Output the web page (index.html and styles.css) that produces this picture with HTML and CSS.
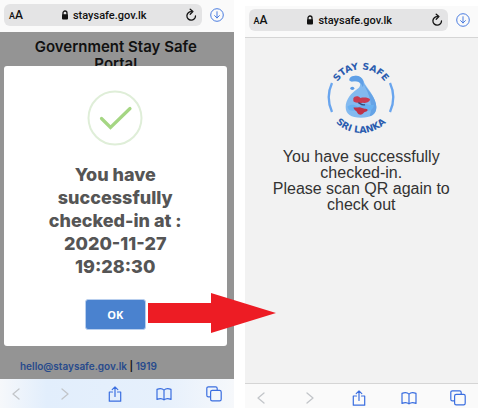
FILE: index.html
```html
<!DOCTYPE html>
<html lang="en">
<head>
    <meta charset="UTF-8">
    <meta name="viewport" content="width=device-width, initial-scale=1.0">
    <title>Stay Safe - Check in</title>
    <link rel="stylesheet" href="styles.css">
</head>
<body>
    <!-- shared icons -->
    <svg class="sprite" aria-hidden="true">
        <symbol id="lock" viewBox="0 0 8 10">
            <path d="M2 5V3a2 2 0 0 1 4 0v2" fill="none" stroke="currentColor" stroke-width="1.3"/>
            <rect x="1" y="4.3" width="6" height="5.2" rx="1" fill="currentColor"/>
        </symbol>
        <symbol id="reload" viewBox="0 0 12 14">
            <path d="M6.5 3.6A4.3 4.3 0 1 0 10.5 8" fill="none" stroke="currentColor" stroke-width="1.3" stroke-linecap="round"/>
            <path d="M5.2 1.2l2.7 2.4-2.7 2.6" fill="none" stroke="currentColor" stroke-width="1.3" stroke-linecap="round" stroke-linejoin="round"/>
        </symbol>
        <symbol id="download" viewBox="0 0 14 14">
            <circle cx="7" cy="7" r="6.3" fill="none" stroke="currentColor"/>
            <path d="M7 3.7v6.2M4.6 7.6L7 10l2.4-2.4" fill="none" stroke="currentColor" stroke-linecap="round" stroke-linejoin="round"/>
        </symbol>
        <symbol id="back" viewBox="0 0 16 16">
            <path d="M11 3L5 8l6 5" fill="none" stroke="currentColor" stroke-width="1.3" stroke-linecap="round" stroke-linejoin="round"/>
        </symbol>
        <symbol id="forward" viewBox="0 0 16 16">
            <path d="M5 3l6 5-6 5" fill="none" stroke="currentColor" stroke-width="1.3" stroke-linecap="round" stroke-linejoin="round"/>
        </symbol>
        <symbol id="share" viewBox="0 0 16 16">
            <path d="M5.5 6H2.3v9.2h11.4V6h-3.2M8 10.5V1M5.2 3.6L8 .9l2.8 2.7" fill="none" stroke="currentColor" stroke-width="1.2" stroke-linecap="round" stroke-linejoin="round"/>
        </symbol>
        <symbol id="book" viewBox="0 0 16 16">
            <path d="M8 4.2C6.4 2.4 3.2 2.4 1 3.4v10c2.2-1 5.4-1 7 .5 1.6-1.5 4.8-1.5 7-.5v-10c-2.2-1-5.4-1-7 .8zM8 4.2v9.7" fill="none" stroke="currentColor" stroke-width="1.2" stroke-linejoin="round"/>
        </symbol>
        <symbol id="tabs" viewBox="0 0 16 16">
            <path d="M4.6 10.8H2.4A1.6 1.6 0 0 1 .8 9.2V2.4A1.6 1.6 0 0 1 2.4.8h7.2a1.6 1.6 0 0 1 1.6 1.6v2" fill="none" stroke="currentColor" stroke-width="1.2"/>
            <rect x="4.6" y="4.4" width="10.6" height="10.4" rx="1.6" fill="none" stroke="currentColor" stroke-width="1.2"/>
        </symbol>
    </svg>

    <main class="steps">
        <section class="phone">
            <header class="browser-bar">
                <div class="address">
                    <button class="text-size" aria-label="Text size"><small>A</small>A</button>
                    <span class="url"><svg class="icon-lock"><use href="#lock"/></svg>staysafe.gov.lk</span>
                    <button class="reload" aria-label="Reload"><svg><use href="#reload"/></svg></button>
                </div>
                <button class="download" aria-label="Downloads"><svg><use href="#download"/></svg></button>
            </header>
            <div class="page dimmed">
                <h1>Government Stay Safe Portal</h1>
                <div class="modal" role="dialog" aria-labelledby="modal-title">
                    <svg class="success" viewBox="0 0 56 56" aria-hidden="true">
                        <circle cx="28" cy="28" r="26.5" fill="none" stroke="#dfeed8" stroke-width="2"/>
                        <path d="M14.5 28.5l9 9L43 18.5" fill="none" stroke="#a5d683" stroke-width="3.2" stroke-linecap="round"/>
                    </svg>
                    <h2 id="modal-title">You have successfully checked-in at : 2020-11-27 19:28:30</h2>
                    <div class="confirm">
                        <button class="ok">OK</button>
                        <svg class="arrow" viewBox="0 0 128 40" aria-hidden="true">
                            <path d="M0 10h63V0l65 20-65 20V30H0z" fill="#ed1c24"/>
                        </svg>
                    </div>
                </div>
                <p class="contact"><a href="mailto:hello@staysafe.gov.lk">hello@staysafe.gov.lk</a> | <a href="tel:1919">1919</a></p>
            </div>
            <nav class="toolbar tinted">
                <button aria-label="Back" disabled><svg><use href="#back"/></svg></button>
                <button aria-label="Forward" disabled><svg><use href="#forward"/></svg></button>
                <button aria-label="Share"><svg><use href="#share"/></svg></button>
                <button aria-label="Bookmarks"><svg><use href="#book"/></svg></button>
                <button aria-label="Tabs"><svg><use href="#tabs"/></svg></button>
            </nav>
        </section>

        <section class="phone second">
            <header class="browser-bar">
                <div class="address">
                    <button class="text-size" aria-label="Text size"><small>A</small>A</button>
                    <span class="url"><svg class="icon-lock"><use href="#lock"/></svg>staysafe.gov.lk</span>
                    <button class="reload" aria-label="Reload"><svg><use href="#reload"/></svg></button>
                </div>
                <button class="download" aria-label="Downloads"><svg><use href="#download"/></svg></button>
            </header>
            <div class="page result">
                <svg class="logo" viewBox="0 0 222 222" role="img" aria-label="Stay Safe Sri Lanka">
                    <defs>
                        <path id="curve-top" d="M25 111a86 86 0 0 1 172 0"/>
                        <path id="curve-bottom" d="M6 111a105 105 0 0 0 210 0"/>
                    </defs>
                    <path d="M24 66Q4 109 24 153M198 66Q218 109 198 153" fill="none" stroke="#69a5ee" stroke-width="7"/>
                    <path d="M82 47c14-6 30-3 36 12 6 18 39 48 39 79 0 23-16 32-46 32s-46-10-46-32c0-22 18-43 34-53 12-8 13-20 2-23-8-2-18 0-22-2-5-3-2-10 3-13z" fill="#83baf0"/>
                    <path d="M82 47c14-6 30-3 36 12 1 8 2 14-2 19-4-12-12-17-20-17-7 0-14 2-17-1-5-3-2-10 3-13z" fill="#5f9fe6"/>
                    <path d="M118 68c13 18 39 43 39 70 0 15-7 24-20 28 10-30 1-65-19-98z" fill="#65a3e6"/>
                    <ellipse cx="85" cy="82" rx="6" ry="5" fill="#5a9ae4"/>
                    <path d="M88 112c3-8 16-9 21-1 9-2 25-2 29 4 0 8-12 13-21 10-11 2-24 1-29-4z" fill="#c83b51"/>
                    <path d="M70 137c10-8 21-7 28-1 10 5 13-9 24-8 9 1 16 7 28 3-2 15-13 21-27 17-17-5-31 5-48-1z" fill="#69b1f1"/>
                    <path d="M89 139c10 2 18-3 25 2 8 3 16 1 17 6-2 7-10 4-13 10-5 6-15 5-18-2-2-6-12-8-11-16z" fill="#bf3247"/>
                    <path d="M103 125c7 4 12 9 20 6" fill="none" stroke="#364b78" stroke-width="4"/>
                    <text class="logo-text"><textPath href="#curve-top" startOffset="50%">STAY SAFE</textPath></text>
                    <text class="logo-text"><textPath href="#curve-bottom" startOffset="50%">SRI LANKA</textPath></text>
                </svg>
                <p>You have successfully checked-in.<br>Please scan QR again to check out</p>
            </div>
            <nav class="toolbar">
                <button aria-label="Back" disabled><svg><use href="#back"/></svg></button>
                <button aria-label="Forward" disabled><svg><use href="#forward"/></svg></button>
                <button aria-label="Share"><svg><use href="#share"/></svg></button>
                <button aria-label="Bookmarks"><svg><use href="#book"/></svg></button>
                <button aria-label="Tabs"><svg><use href="#tabs"/></svg></button>
            </nav>
        </section>
    </main>
</body>
</html>
```
FILE: styles.css
```css
* {
    box-sizing: border-box;
}

body {
    margin: 0;
    background: #ffffff;
    font-family: Inter, "Liberation Sans", sans-serif;
    color: #111111;
}

button {
    padding: 0;
    border: none;
    background: none;
    color: inherit;
    font: inherit;
    cursor: pointer;
}

.sprite {
    display: none;
}

.steps {
    display: grid;
    grid-template-columns: 1fr 1fr;
    gap: 11px;
    min-height: 100vh;
    padding-right: 22px;
}

.phone {
    display: flex;
    flex-direction: column;
    min-width: 0;
}

.second {
    padding-top: 6px;
}

/* browser top bar */
.browser-bar {
    display: flex;
    align-items: center;
    gap: 8px;
    padding: 4px 10px 6px 4px;
    background: #fafafa;
    font-family: Roboto, sans-serif;
}

.second .browser-bar {
    padding: 3px 8px 6px 4px;
    border-bottom: 1px solid #d5d5d5;
}

.address {
    flex: 1;
    display: flex;
    align-items: center;
    justify-content: space-between;
    height: 22px;
    padding: 0 5px;
    border-radius: 6px;
    background: #e4e4e5;
}

.text-size {
    font-size: 12px;
    font-weight: 500;
}

.text-size small {
    font-size: 9px;
}

.url {
    display: flex;
    align-items: center;
    gap: 4px;
    font-size: 11px;
    font-weight: 500;
}

.icon-lock {
    width: 8px;
    height: 10px;
}

.reload svg {
    display: block;
    width: 12px;
    height: 14px;
}

.download {
    color: #4b7de0;
}

.download svg {
    display: block;
    width: 14px;
    height: 14px;
}

/* page content */
.page {
    flex: 1;
    display: flex;
    flex-direction: column;
}

.dimmed {
    position: relative;
    background: #949494;
}

h1 {
    margin: 0;
    padding: 6px 34px 0 32px;
    font-size: 15px;
    line-height: 17px;
    font-weight: 600;
    text-align: center;
}

.modal {
    position: absolute;
    top: 34px;
    right: 7px;
    left: 4px;
    display: flex;
    flex-direction: column;
    align-items: center;
    padding: 24px 32px 16px;
    border-radius: 3px;
    background: #ffffff;
}

.success {
    width: 56px;
    height: 56px;
}

h2 {
    margin: 17px 0 21px;
    color: #555555;
    font-size: 18px;
    line-height: 23px;
    font-weight: 800;
    text-align: center;
}

.confirm {
    position: relative;
}

.ok {
    display: block;
    width: 61px;
    height: 31px;
    border: 1px solid #b9cfee;
    border-radius: 3px;
    background: #4a82cf;
    color: #ffffff;
    font-family: "Open Sans", sans-serif;
    font-size: 11px;
    font-weight: 700;
}

.arrow {
    position: absolute;
    top: -6px;
    left: calc(100% + 2px);
    z-index: 1;
    width: 128px;
    height: 40px;
}

.contact {
    margin: auto 0 0;
    padding: 0 20px 6px;
    font-size: 10px;
    line-height: 14px;
    font-weight: 600;
}

.contact a {
    color: #274a8c;
    text-decoration: none;
}

.result {
    align-items: center;
    padding: 23px 28px;
    background: #f2f2f2;
}

.logo {
    width: 74px;
    height: 74px;
}

.logo-text {
    fill: #2a5caf;
    font-family: "DejaVu Sans", sans-serif;
    font-size: 28px;
    font-weight: 700;
    text-anchor: middle;
}

.result p {
    margin: 14px 0 0;
    color: #333333;
    font-family: "Liberation Sans", Arial, sans-serif;
    font-size: 16px;
    line-height: 16px;
    text-align: center;
}

/* browser bottom bar */
.toolbar {
    display: flex;
    align-items: center;
    justify-content: space-between;
    height: 29px;
    padding: 0 12px 0 8px;
    background: #fafafa;
    color: #3a6ee0;
}

.second .toolbar {
    height: 25px;
    padding-top: 4px;
    border-top: 1px solid #d5d5d5;
}

.tinted {
    background: linear-gradient(90deg, #f6f8fb, #e2eefc 20%, #e6f0fc 70%, #f6f8fb);
}

.toolbar button:disabled {
    color: #c2c5c9;
}

.toolbar svg {
    display: block;
    width: 16px;
    height: 16px;
}
```
